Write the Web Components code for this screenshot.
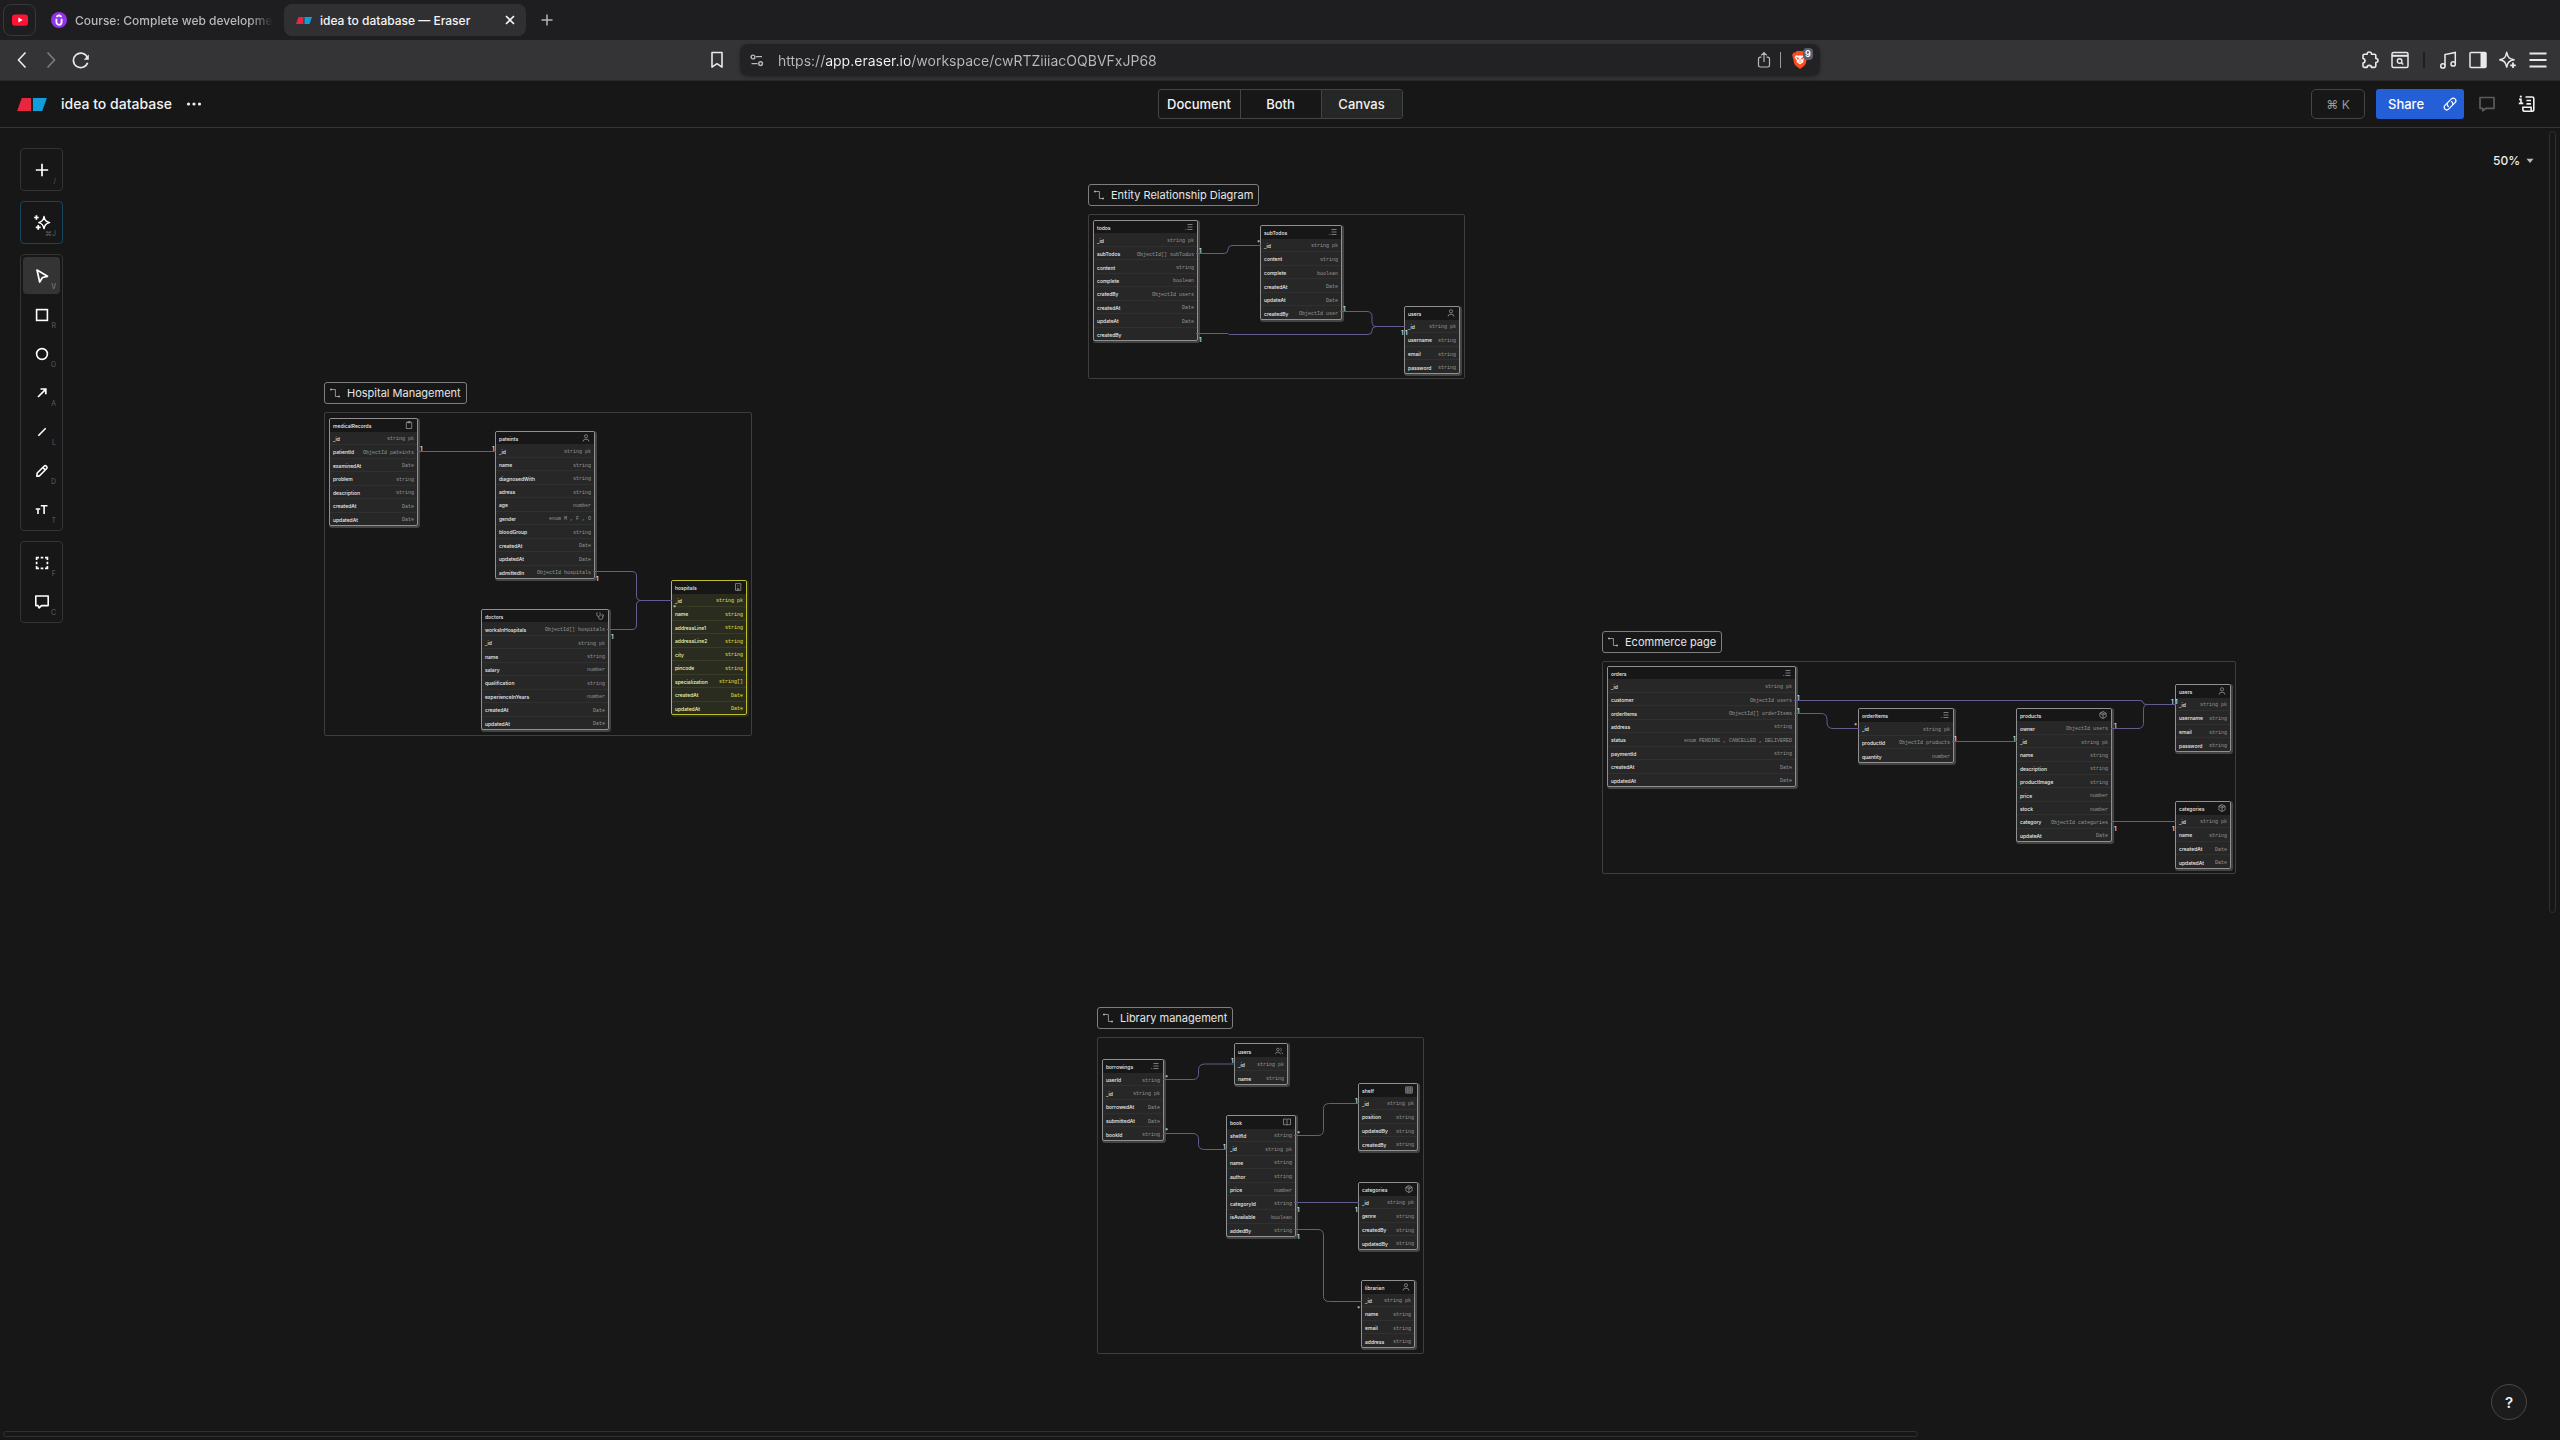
<!DOCTYPE html>
<html lang="en">
<head>
<meta charset="utf-8">
<title>idea to database — Eraser</title>
<style>
  html, body { margin: 0; height: 100%; background: #171717; }
  body { font-family: Inter, "Noto Sans", sans-serif; color: #f2f2f2; overflow: hidden; }
</style>
</head>
<body>
<eraser-window></eraser-window>
<script>
const ICONS = {
  youtube: ['0 0 16 16', '<rect x="0" y="2.4" width="16" height="11.4" rx="3" fill="#ff1233"/><path d="M6.4 5.6v5l4.2-2.5z" fill="#fff"/>'],
  udemy: ['0 0 16 16', '<circle cx="8" cy="8" r="8" fill="#9333ea"/><path d="M5.4 6.8v3.2a2.6 2.8 0 0 0 5.2 0V6.8M5.4 4.8L8 3.2l2.6 1.6" fill="none" stroke="#fff" stroke-width="1.8"/>'],
  eraser: ['0 0 32 14', '<path d="M5 0h10v14H0z" fill="#e8273f"/><path d="M17 0h15l-5 14H17z" fill="#109ddc"/>'],
  close: ['0 0 16 16', '<path d="M4 4l8 8M12 4l-8 8" fill="none" stroke="currentColor" stroke-width="1.7"/>'],
  plus: ['0 0 16 16', '<path d="M8 2.5v11M2.5 8h11" fill="none" stroke="currentColor" stroke-width="1.5"/>'],
  back: ['0 0 16 16', '<path d="M11.5 0.5L4.5 8l7 7.5" fill="none" stroke="currentColor" stroke-width="1.6"/>'],
  forward: ['0 0 16 16', '<path d="M4.5 0.5L11.5 8l-7 7.5" fill="none" stroke="currentColor" stroke-width="1.6"/>'],
  reload: ['0 0 18 18', '<path d="M15.3 6.2A7.3 7.3 0 1 0 15.6 11.8" fill="none" stroke="currentColor" stroke-width="1.7"/><path d="M16.8 3.6v5.2h-5z" fill="currentColor"/>'],
  bookmark: ['0 0 16 18', '<path d="M3 1.5h10v14.6l-5-3.4-5 3.4z" fill="none" stroke="currentColor" stroke-width="1.6" stroke-linejoin="round"/>'],
  tune: ['0 0 14 14', '<g fill="none" stroke="currentColor" stroke-width="1.4"><circle cx="3" cy="4" r="1.9"/><path d="M6 3.6h6M1.5 10.6h6"/><circle cx="10.6" cy="10.6" r="1.9"/></g>'],
  upload: ['0 0 14 18', '<path d="M4.5 6.2H3.2A1.7 1.7 0 0 0 1.5 8v6.3A1.7 1.7 0 0 0 3.2 16h7.6a1.7 1.7 0 0 0 1.7-1.7V8a1.7 1.7 0 0 0-1.7-1.8H9.500M7 11V1.700M4.200 4.400L7 1.600l2.800 2.800" fill="none" stroke="currentColor" stroke-width="1.2"/>'],
  brave: ['0 0 16 18', '<path d="M4.600 0h6.800l1.500 1.600 1.900.2 1 2.400-.5 1.700-1.500 6.700c-.3 1-1 1.700-1.800 2.300L8 18l-4-3.100c-.8-.6-1.500-1.300-1.800-2.300L.7 5.900.2 4.200l1-2.400 1.900-.2z" fill="#fb4a20"/><path d="M4 4.200l2.500.5L8 4.200l1.500.5 2.500-.5 1.400 2.300-2.300 3 .4 1.500L8 13.500 4.500 11l.4-1.500-2.300-3z" fill="#fff"/><path d="M4.600 6.500l2.200.7L6 8.500zM11.400 6.500l-2.200.7.8 1.300zM8 8v2.400M6.500 11h3" fill="#fb4a20" stroke="#fb4a20" stroke-width=".6"/>'],
  puzzle: ['0 0 18 18', '<path d="M2 4.500Q2 3.200 3.300 3.200H6.200Q6 1 8.300 1t2.200 2.200h3q1.300 0 1.300 1.300v3q2.300.1 2.200 2t-2.200 2v3.600q0 1.300-1.300 1.300H10.500q0-2-2.200-2t-2.200 2H3.300Q2 16.400 2 15.100v-3q2-.3 2-2.300T2 7.500z" fill="none" stroke="currentColor" stroke-width="1.6" stroke-linejoin="round"/>'],
  findbox: ['0 0 18 18', '<rect x="1" y="1.500" width="16" height="15" rx="1.500" fill="none" stroke="currentColor" stroke-width="1.500"/><path d="M1 4.800h16" stroke="currentColor" stroke-width="2"/><circle cx="8.600" cy="10" r="2.300" fill="none" stroke="currentColor" stroke-width="1.400"/><path d="M10.300 11.600l1.900 1.900" stroke="currentColor" stroke-width="1.400"/>'],
  music: ['0 0 18 18', '<g fill="none" stroke="currentColor" stroke-width="1.500"><path d="M6 14.600V3.600L16.300 1.500v11"/><circle cx="3.900" cy="14.900" r="2.200"/><circle cx="14.200" cy="12.900" r="2.200"/></g>'],
  sidebar: ['0 0 18 18', '<rect x="1" y="1.500" width="16" height="15" rx="1" fill="none" stroke="currentColor" stroke-width="1.500"/><path d="M11.500 1.500H17v15h-5.500z" fill="currentColor"/>'],
  leo: ['0 0 18 18', '<path d="M7.700 1.300C8.300 4 9 5.800 10 6.700s2.300 1.500 5 2.100c-2.700.6-4 1.200-5 2.100s-1.700 2.500-2.300 5.200c-.6-2.700-1.200-4.300-2.200-5.200S3 9.400.800 8.800c2.200-.6 3.700-1.200 4.700-2.100s1.600-2.700 2.200-5.400z" fill="none" stroke="currentColor" stroke-width="1.500" stroke-linejoin="round"/><path d="M14 11.500v5.600M11.200 14.300h5.600" stroke="currentColor" stroke-width="1.800"/>'],
  menu: ['0 0 18 18', '<path d="M.5 2.500h17M.5 9h17M.5 15.500h17" stroke="currentColor" stroke-width="1.800"/>'],
  dots: ['0 0 16 16', '<g fill="currentColor"><circle cx="2.500" cy="8" r="1.600"/><circle cx="8" cy="8" r="1.600"/><circle cx="13.500" cy="8" r="1.600"/></g>'],
  link: ['0 0 16 16', '<g transform="rotate(-45 8 8)" fill="none" stroke="currentColor" stroke-width="1.200"><path d="M7 5.400H3.400a2.600 2.600 0 0 0 0 5.200H8.400a2.600 2.600 0 0 0 2.300-3.600"/><path d="M9 10.600h3.600a2.600 2.600 0 0 0 0-5.200H7.600A2.600 2.600 0 0 0 5.300 9"/></g>'],
  comment: ['0 0 18 18', '<path d="M2 2.500h14v10.800H8l-3.300 2.500V13.300H2z" fill="none" stroke="currentColor" stroke-width="1.700" stroke-linejoin="round"/>'],
  notes: ['0 0 18 18', '<g fill="none" stroke="currentColor" stroke-width="1.600"><path d="M7.500 2h6.800q1.500 0 1.500 1.500v11q0 1.700-1.700 1.700H6.800q-1.900 0-1.900-1.800v-2.100h8.200v2.100q0 1.500 1.200 1.800"/><path d="M8.500 5.500h4.500M8.500 8.900h4.500"/><path d="M1 4.400h2v4M.8 8.400h4.400"/></g><circle cx="2.800" cy="1.600" r="1.100" fill="currentColor"/>'],
  caret: ['0 0 8 6', '<path d="M.5.800h7L4 5z" fill="currentColor"/>'],
  sparkles: ['0 0 18 18', '<g fill="none" stroke="currentColor" stroke-linejoin="round"><path d="M11 2.600c.7 3.600 1.600 4.900 5.600 6-4 1.100-4.900 2.400-5.600 6-.7-3.600-1.600-4.900-5.200-6 3.600-1.100 4.500-2.400 5.200-6z" stroke-width="1.500"/><path d="M3.400 1.200v4.600M1.100 3.500h4.600M5.200 11v4.800M2.800 13.400h4.800" stroke-width="1.700"/></g>'],
  pointer: ['0 0 18 18', '<path d="M4 3l10.500 6.300-5 1.200-2.800 4.500z" fill="none" stroke="currentColor" stroke-width="1.700" stroke-linejoin="round"/>'],
  square: ['0 0 18 18', '<rect x="3.600" y="3.600" width="10.800" height="10.800" fill="none" stroke="currentColor" stroke-width="1.600"/>'],
  circle: ['0 0 18 18', '<circle cx="9" cy="9" r="5.400" fill="none" stroke="currentColor" stroke-width="1.600"/>'],
  arrow: ['0 0 18 18', '<path d="M5 13l7.600-7.600M7.500 5h5.300v5.300" fill="none" stroke="currentColor" stroke-width="1.700"/>'],
  line: ['0 0 18 18', '<path d="M5.300 12.700l7.400-7.400" fill="none" stroke="currentColor" stroke-width="1.600"/>'],
  pencil: ['0 0 18 18', '<path d="M3.800 14.200l.4-3.200 7.100-7q1.100-.9 2.200.2t.2 2.300l-7.100 7.200q-1.400.8-2.800.5zM10.300 6l1.600 1.600" fill="none" stroke="currentColor" stroke-width="1.600" stroke-linejoin="round"/>'],
  textsize: ['0 0 18 18', '<path d="M7.800 4.800h6.700M11.100 4.800v8.200M2.700 8h4.500M5 8v5" fill="none" stroke="currentColor" stroke-width="1.600"/>'],
  frame: ['0 0 18 18', '<path d="M3.600 6V3.600H6M12 3.600h2.400V6M14.400 12v2.400H12M6 14.400H3.600V12M7.700 3.600h2.600M7.700 14.400h2.600M3.600 7.700v2.600M14.400 7.700v2.600" fill="none" stroke="currentColor" stroke-width="1.700"/>'],
  bubble: ['0 0 18 18', '<path d="M2.800 3h12.400v9.600H8.500l-2.400 2.300-1-2.300H2.800z" fill="none" stroke="currentColor" stroke-width="1.600" stroke-linejoin="round"/>'],
  flow: ['0 0 10 10', '<path d="M1.800 1.500H5.400V8.500H8.500" fill="none" stroke="currentColor" stroke-width=".8"/><path d="M0 .8h2v1.500H0zM8 7.800h2v1.500H8z" fill="currentColor"/>'],
  list: ['0 0 8 8', '<path d="M2.500 1.500h5M2.500 4h5M2.500 6.500h5M.3 6.500h1" stroke="currentColor" stroke-width=".7"/>'],
  user: ['0 0 8 8', '<g fill="none" stroke="currentColor" stroke-width=".7"><circle cx="4" cy="2.300" r="1.600"/><path d="M1 7.600Q1 5.200 4 5.200t3 2.400"/></g>'],
  users: ['0 0 9 8', '<g fill="none" stroke="currentColor" stroke-width=".7"><circle cx="3.300" cy="2.300" r="1.500"/><path d="M.5 7.600q0-2.400 2.800-2.400t2.800 2.400M6 .9q1.300.4 1.300 1.500T6 4M7.300 5.300q1.200.6 1.200 2.300"/></g>'],
  clipboard: ['0 0 8 8', '<path d="M1.300 1.300h5.400v6.200H1.300zM2.800.5h2.400v1.300H2.800z" fill="none" stroke="currentColor" stroke-width=".7"/>'],
  steth: ['0 0 8 8', '<g fill="none" stroke="currentColor" stroke-width=".7"><path d="M1.500.8H.8v2q0 1.600 1.700 1.600T4.200 2.800v-2h-.700M2.500 4.500q0 3 2.300 3T7 4.500"/><circle cx="6.700" cy="3.500" r=".9"/></g>'],
  building: ['0 0 8 8', '<path d="M1.500.6h5.300v6.800H1.500zM3 3h.8M4.600 3h.8M3.400 7.400V5.500h1.400v1.900" fill="none" stroke="currentColor" stroke-width=".7"/>'],
  box: ['0 0 8 8', '<path d="M4 .5l3.100 1.700v3.600L4 7.500.9 5.800V2.200zM.9 2.200L4 4l3.100-1.800M4 4v3.500M2.400 1.400l3.100 1.700" fill="none" stroke="currentColor" stroke-width=".7"/>'],
  book: ['0 0 8 8', '<path d="M4 1.600Q3.400 1 2.400 1H.5v5.700h2.200Q3.700 6.700 4 7.300 4.300 6.700 5.300 6.700H7.500V1H5.600Q4.600 1 4 1.600v5.500" fill="none" stroke="currentColor" stroke-width=".7"/>'],
  grid: ['0 0 8 8', '<path d="M.7.900h6.600v6.200H.7zM.7 3h6.600M.7 5h6.600M2.900.9v6.200M5.100.9v6.200" fill="none" stroke="currentColor" stroke-width=".7"/>']
};

/* Base class: clones a template string into an open shadow root. */
class ShadowElement extends HTMLElement {
  connectedCallback() {
    if (this.shadowRoot) return;
    const t = document.createElement('template');
    t.innerHTML = `<style>*{box-sizing:border-box}button{font:inherit;color:inherit;background:none;border:0;padding:0;margin:0;cursor:pointer;display:flex;align-items:center;justify-content:center}${this.css()}</style>${this.html()}`;
    this.attachShadow({ mode: 'open' }).append(t.content.cloneNode(true));
  }
  css() { return ':host{display:block}'; }
  html() { return '<slot></slot>'; }
}

/* <ui-icon name w h>: one glyph of the icon set. */
customElements.define('ui-icon', class extends ShadowElement {
  css() { return ':host{display:inline-flex;flex:none}svg{display:block}'; }
  html() {
    const [box, body] = ICONS[this.getAttribute('name')];
    const w = this.getAttribute('w') || 18, h = this.getAttribute('h') || w;
    return `<svg width="${w}" height="${h}" viewBox="${box}" aria-hidden="true">${body}</svg>`;
  }
});

customElements.define('browser-tab', class extends ShadowElement {
  css() { return `
    :host{display:flex;align-items:center;height:32px;width:242px;border-radius:8px;padding:0 8px 0 12px;gap:8px;color:#b9b9bb;font-size:12px;font-weight:500;white-space:nowrap}
    :host([active]){background:#303032;color:#f4f4f4}
    :host([pinned]){width:33px;padding:0;justify-content:center;border:1px solid #38383a}
    .t{flex:1;overflow:hidden}
    :host([pinned]) .t{display:none}
    :host([fade]) .t{mask-image:linear-gradient(90deg,#000 calc(100% - 24px),transparent)}
    button{width:16px;height:16px}`; }
  html() { return `<slot name="icon"></slot><span class="t"><slot></slot></span>${this.hasAttribute('active') ? '<button aria-label="Close tab"><ui-icon name="close" w="16"></ui-icon></button>' : ''}`; }
});

customElements.define('tab-strip', class extends ShadowElement {
  css() { return `
    :host{display:flex;align-items:center;height:40px;background:#1e1e20;padding-left:3px;gap:3px}
    .new{width:36px;height:32px;color:#b5b5b7}`; }
  html() { return `
    <browser-tab pinned><ui-icon slot="icon" name="youtube" w="16"></ui-icon></browser-tab>
    <browser-tab fade><ui-icon slot="icon" name="udemy" w="16"></ui-icon>Course: Complete web developmen</browser-tab>
    <browser-tab active><ui-icon slot="icon" name="eraser" w="16" h="7"></ui-icon>idea to database — Eraser</browser-tab>
    <button class="new" aria-label="New tab"><ui-icon name="plus" w="16"></ui-icon></button>`; }
});

customElements.define('browser-toolbar', class extends ShadowElement {
  css() { return `
    :host{display:grid;grid-template-columns:1fr minmax(400px,1080px) 1fr;align-items:center;height:41px;background:#343436;border-bottom:1px solid #2a2a2c;color:#e9e9ea}
    .nav{display:flex;align-items:center;gap:12px;padding:0 15px 0 14px}
    .nav .off{color:#7b7b7d}.nav .mark{margin-left:auto}
    .url{display:flex;align-items:center;height:32px;border-radius:8px;background:#222224;padding:0 12px 0 10px;box-shadow:0 1px 4px rgba(0,0,0,.3);color:#b9b9bb}
    input{flex:1;min-width:0;height:24px;border:0;outline:0;padding:0;margin:0 12px 0 14px;font:14px Inter,sans-serif;color:transparent;background:linear-gradient(90deg,#b9b9bb 47px,#f4f4f4 47px,#f4f4f4 132px,#b9b9bb 132px);-webkit-background-clip:text;background-clip:text}
    .sep{width:1px;height:16px;background:#99999b;margin:0 11px 0 9px}
    .shield{position:relative}
    .badge{position:absolute;left:11px;top:-3px;height:12px;padding:0 2px;min-width:10px;border-radius:4px;background:#5c5f70;color:#fff;font:600 9px/12px Inter,sans-serif;text-align:center}
    .tools{display:flex;align-items:center;justify-content:flex-end;gap:12px;padding-right:13px}
    .rule{width:2px;height:16px;background:#1f1f21;margin:0 2px}`; }
  html() { return `
    <nav class="nav"><button aria-label="Back"><ui-icon name="back" w="16"></ui-icon></button>
      <button class="off" aria-label="Forward"><ui-icon name="forward" w="18" h="16"></ui-icon></button>
      <button aria-label="Reload"><ui-icon name="reload" w="18"></ui-icon></button>
      <button class="mark" aria-label="Bookmark"><ui-icon name="bookmark" w="16" h="18"></ui-icon></button></nav>
    <div class="url"><ui-icon name="tune" w="14"></ui-icon>
      <input type="text" aria-label="Address" value="https://app.eraser.io/workspace/cwRTZiiiacOQBVFxJP68">
      <button aria-label="Share page"><ui-icon name="upload" w="14" h="18"></ui-icon></button><span class="sep"></span>
      <button class="shield" aria-label="Shields"><ui-icon name="brave" w="16" h="18"></ui-icon><span class="badge">9</span></button></div>
    <div class="tools"><button aria-label="Extensions"><ui-icon name="puzzle"></ui-icon></button>
      <button aria-label="Search tabs"><ui-icon name="findbox"></ui-icon></button><span class="rule"></span>
      <button aria-label="Media"><ui-icon name="music"></ui-icon></button>
      <button aria-label="Sidebar"><ui-icon name="sidebar"></ui-icon></button>
      <button aria-label="Assistant"><ui-icon name="leo"></ui-icon></button>
      <button aria-label="Menu"><ui-icon name="menu"></ui-icon></button></div>`; }
});

customElements.define('view-switch', class extends ShadowElement {
  css() { return `
    :host{display:flex;height:30px;border:1px solid #444;border-radius:3px;overflow:hidden;font-size:13px;font-weight:500}
    button{width:81px}
    button+button{border-left:1px solid #444}
    [aria-pressed=true]{background:#252626}`; }
  html() { return ['Document', 'Both', 'Canvas'].map(v => `<button aria-pressed="${v === 'Canvas'}">${v}</button>`).join(''); }
});

customElements.define('app-header', class extends ShadowElement {
  css() { return `
    :host{display:grid;grid-template-columns:1fr auto 1fr;align-items:center;height:47px;border-bottom:1px solid #363636;background:#171717}
    .left{display:flex;align-items:center;padding-left:16px}
    h1{margin:0 14px 0 13px;font-size:14px;font-weight:500;line-height:20px}
    .right{display:flex;align-items:center;justify-content:flex-end;padding-right:24px}
    .cmd{width:54px;height:30px;border:1px solid #444;border-radius:5px;color:#9a9a9a;font-size:12px;margin-right:11px}
    .share{width:88px;height:30px;border-radius:3px;background:#255fd8;color:#fff;font-size:13px;font-weight:500;justify-content:space-between;padding:0 6px 0 12px;margin-right:14px}
    .dim{color:#5c5c5c;margin-right:22px}`; }
  html() { return `
    <div class="left"><ui-icon name="eraser" w="32" h="13"></ui-icon><h1>idea to database</h1><button aria-label="More"><ui-icon name="dots" w="16"></ui-icon></button></div>
    <view-switch></view-switch>
    <div class="right"><button class="cmd">⌘ K</button><button class="share">Share<ui-icon name="link" w="16"></ui-icon></button>
      <button class="dim" aria-label="Comments"><ui-icon name="comment"></ui-icon></button><button aria-label="Notes"><ui-icon name="notes"></ui-icon></button></div>`; }
});

customElements.define('tool-group', class extends ShadowElement {
  css() { return `
    :host{display:flex;flex-direction:column;gap:2px;padding:2px;border:1px solid #343434;border-radius:4px;background:#171717}
    :host([accent]){border-color:#16465f}`; }
});
customElements.define('tool-button', class extends ShadowElement {
  css() { return `
    :host{display:block}
    button{width:37px;height:37px;border-radius:4px;position:relative;color:#fff}
    :host([active]) button{background:#343434}
    kbd{position:absolute;right:4px;bottom:3px;font:7px/8px Inter,sans-serif;color:#5e5e5e}
    :host([active]) kbd{color:#8a8a8a}`; }
  html() { return `<button aria-label="${this.getAttribute('label')}"><ui-icon name="${this.getAttribute('icon')}"></ui-icon><kbd><slot></slot></kbd></button>`; }
});
customElements.define('tool-rail', class extends ShadowElement {
  css() { return ':host{display:flex;flex-direction:column;gap:10px}'; }
  html() {
    const b = (icon, key, label, a = '') => `<tool-button icon="${icon}" label="${label}" ${a}>${key}</tool-button>`;
    return `<tool-group>${b('plus', '/', 'Insert')}</tool-group>
      <tool-group accent>${b('sparkles', '⌘J', 'AI')}</tool-group>
      <tool-group>${b('pointer', 'V', 'Select', 'active')}${b('square', 'R', 'Rectangle')}${b('circle', 'O', 'Ellipse')}${b('arrow', 'A', 'Arrow')}${b('line', 'L', 'Line')}${b('pencil', 'D', 'Draw')}${b('textsize', 'T', 'Text')}</tool-group>
      <tool-group>${b('frame', 'F', 'Figure')}${b('bubble', 'C', 'Comment')}</tool-group>`;
  }
});

/* <entity-table name icon rows="field:type|…">: one entity of a diagram; its rows share the height evenly. */
customElements.define('entity-table', class extends ShadowElement {
  css() { return `
    :host{display:block;border:1px solid #909090;border-radius:2px;background:#272727;box-shadow:1px 1px 0 1px #434343;overflow:hidden;--line:#303030;--name:#ececec;--type:#979797}
    :host([tone=yellow]){border-color:#bdbf2c;background:#2b2c20;box-shadow:1px 1px 0 1px #2b2c20;--line:#3a3b26;--name:#f5f5b4;--type:#e2e437}
    table{display:flex;flex-direction:column;height:100%;font-size:5px;line-height:8px;white-space:nowrap}
    thead,tbody{display:contents}
    tr{display:flex;flex:1;min-height:0;align-items:center;justify-content:space-between;padding:2px 3px 0}
    th,td{padding:0;font-weight:500;color:var(--name)}
    thead tr{background:#171717;padding-right:4px}
    thead th{color:#ececec}
    ui-icon{color:#a5a5a5}
    tbody tr+tr{border-top:1px solid var(--line)}
    td{font-family:"Liberation Mono",monospace;font-weight:400;color:var(--type);padding-top:1px}`; }
  html() {
    const rows = this.getAttribute('rows').split('|').map(r => { const [n, t = ''] = r.split(':'); return `<tr><th scope="row">${n}</th><td>${t}</td></tr>`; }).join('');
    return `<table><thead><tr><th>${this.getAttribute('name')}</th><th><ui-icon name="${this.getAttribute('icon')}" w="8"></ui-icon></th></tr></thead><tbody>${rows}</tbody></table>`;
  }
});

customElements.define('diagram-label', class extends ShadowElement {
  css() { return ':host{display:flex;align-items:center;height:22px;padding:0 5px;gap:7px;border:1px solid #7e7e7e;border-radius:3px;background:#171717;font-size:11px;white-space:nowrap;color:#e6e6e6}ui-icon{color:#b0b0b0}'; }
  html() { return '<ui-icon name="flow" w="10"></ui-icon><slot></slot>'; }
});

/* Board coordinates are window coordinates; BOARD_TOP is where the board starts. */
const BOARD_TOP = 128;
const FRAMES = [
  ['Entity Relationship Diagram', 1088, 214, 377, 165],
  ['Hospital Management', 324, 412, 428, 324],
  ['Ecommerce page', 1602, 661, 634, 213],
  ['Library management', 1097, 1037, 327, 317]
];
const ENTITIES = [
  ['todos', 'list', 1093, 220, 105, 121, '_id:string pk|subTodos:ObjectId[] subTodos|content:string|complete:boolean|cratedBy:ObjectId users|createdAt:Date|updateAt:Date|createdBy'],
  ['subTodos', 'list', 1260, 225, 82, 95, '_id:string pk|content:string|complete:boolean|createdAt:Date|updateAt:Date|createdBy:ObjectId user'],
  ['users', 'user', 1404, 306, 56, 68, '_id:string pk|username:string|email:string|password:string'],
  ['medicalRecords', 'clipboard', 329, 418, 89, 108, '_id:string pk|patientId:ObjectId pateints|examinedAt:Date|problem:string|description:string|createdAt:Date|updatedAt:Date'],
  ['pateints', 'user', 495, 431, 100, 148, '_id:string pk|name:string|diagnosedWith:string|adress:string|age:number|gender:enum M , F , O|bloodGroup:string|createdAt:Date|updatedAt:Date|admittedIn:ObjectId hospitals'],
  ['doctors', 'steth', 481, 609, 128, 121, 'worksInHospitals:ObjectId[] hospitals|_id:string pk|name:string|salary:number|qualification:string|experienceInYears:number|createdAt:Date|updatedAt:Date'],
  ['hospitals', 'building', 671, 580, 76, 135, '_id:string pk|name:string|addressLine1:string|addressLine2:string|city:string|pincode:string|specialization:string[]|createdAt:Date|updatedAt:Date', 'yellow'],
  ['orders', 'list', 1607, 666, 189, 121, '_id:string pk|customer:ObjectId users|orderItems:ObjectId[] orderItems|address:string|status:enum PENDING , CANCELLED , DELIVERED|paymentId:string|createdAt:Date|updatedAt:Date'],
  ['orderItems', 'list', 1858, 708, 96, 55, '_id:string pk|productId:ObjectId products|quantity:number'],
  ['products', 'box', 2016, 708, 96, 134, 'owner:ObjectId users|_id:string pk|name:string|description:string|productImage:string|price:number|stock:number|category:ObjectId categories|updateAt:Date'],
  ['users', 'user', 2175, 684, 56, 68, '_id:string pk|username:string|email:string|password:string'],
  ['categories', 'box', 2175, 801, 56, 68, '_id:string pk|name:string|createdAt:Date|updatedAt:Date'],
  ['borrowings', 'list', 1102, 1059, 62, 82, 'userId:string|_id:string pk|borrowedAt:Date|submittedAt:Date|bookId:string'],
  ['users', 'users', 1234, 1043, 54, 42, '_id:string pk|name:string'],
  ['book', 'book', 1226, 1115, 70, 122, 'shelfId:string|_id:string pk|name:string|author:string|price:number|categoryId:string|isAvailable:boolean|addedBy:string'],
  ['shelf', 'grid', 1358, 1083, 60, 68, '_id:string pk|position:string|updatedBy:string|createdBy:string'],
  ['categories', 'box', 1358, 1182, 60, 68, '_id:string pk|genre:string|createdBy:string|updatedBy:string'],
  ['librarian', 'user', 1361, 1280, 54, 68, '_id:string pk|name:string|email:string|address:string']
];
const WIRES = [
  'M1196 253.5H1224q4 0 4-4t4-4H1261', 'M1196 333.5H1228l1 1H1368q4 0 4-4t4-4H1405', 'M1340 311.500H1367q5 0 5 5v5q0 5 4 5',
  'M417 451.500H496', 'M593 571.500H632q4.500 0 4.500 4.500v20q0 4.500 5 4.500H672', 'M607 629.500H632q4.500 0 4.500-4.500v-20q0-4.500 5-4.500',
  'M1794 700.500H2140q3 0 3 2t4 2H2176', 'M1794 713.500H1821q6 0 6 6v3q0 6 6 6H1859', 'M1952 741.500H2017', 'M2111 728.500H2138q5 0 5.500-5v-14q0-5 4-5', 'M2111 821.500H2176',
  'M1163 1079.500H1193q5 0 5.500-5v-5q0-5 6-5.500H1235', 'M1163 1133.500H1193q5 0 5.500 5v6q0 5 6 5H1227',
  'M1294 1135.500H1318q5 0 5.500-5v-22q0-5 6-5H1359', 'M1294 1202.500H1359', 'M1294 1229.500H1318q5 0 5.500 5v62q0 5 6 5H1362'
];
const MARKS = [
  ['1', 1199, 253], ['*', 1257, 245], ['1', 1343, 311], ['1', 1199, 342], ['1', 1401, 335], ['1', 1405, 335],
  ['1', 420, 451], ['1', 492, 451], ['1', 596, 581], ['1', 611, 639], ['*', 673, 610],
  ['1', 1797, 700], ['1', 1797, 713], ['*', 1854, 728], ['1', 1954, 741], ['1', 2013, 741], ['1', 2114, 728], ['1', 2171, 704], ['1', 2175, 704], ['1', 2114, 831], ['1', 2172, 831],
  ['*', 1165, 1080], ['1', 1231, 1063], ['*', 1165, 1133], ['1', 1223, 1149], ['*', 1297, 1136], ['1', 1355, 1103],
  ['1', 1297, 1212], ['1', 1355, 1212], ['1', 1297, 1239], ['*', 1357, 1311]
];

customElements.define('diagram-board', class extends ShadowElement {
  css() { return `
    :host{display:block;position:relative;overflow:hidden;background:#171717}
    .frame,entity-table,diagram-label,svg.wires,tool-rail,.zoom,.help,.bar{position:absolute}
    .frame{border:1px solid #3e3e3e;border-radius:2px}
    svg.wires{left:0;top:0;width:100%;height:100%;overflow:visible;pointer-events:none}
    .wires path{fill:none;stroke:#625d8c;stroke-width:1}
    .wires text{font:600 6px Inter,sans-serif;fill:#e0e0e0}
    tool-rail{left:20px;top:20px}
    .zoom{right:26px;top:24px;display:flex;align-items:center;gap:5px}
    select{appearance:none;border:0;background:none;color:#eee;font:500 12px/18px Inter,sans-serif;padding:0;outline:0}
    .zoom ui-icon{color:#bbb}
    .help{right:33px;bottom:20px;width:36px;height:36px;border-radius:18px;border:1px solid #484848;background:#1c1c1c;font-size:15px;font-weight:600}
    .bar{border:1px solid #303030;border-radius:4px}
    .v{right:4px;top:3px;width:7px;height:calc(60% - 5px)}.h{left:3px;bottom:3px;height:6px;width:calc(75% - 5px)}`; }
  html() {
    const at = (x, y) => `left:${x}px;top:${y - BOARD_TOP}px`;
    return FRAMES.map(([n, x, y, w, h]) => `<div class="frame" style="${at(x, y)};width:${w}px;height:${h}px"></div><diagram-label style="${at(x, y - 30)}">${n}</diagram-label>`).join('')
      + ENTITIES.map(([n, i, x, y, w, h, r, tone]) => `<entity-table name="${n}" icon="${i}" rows="${r}" ${tone ? `tone="${tone}"` : ''} style="${at(x, y)};width:${w}px;height:${h}px"></entity-table>`).join('')
      + `<svg class="wires"><g transform="translate(0 ${-BOARD_TOP})">${WIRES.map(d => `<path d="${d}"/>`).join('')}${MARKS.map(([t, x, y]) => `<text x="${x}" y="${y}">${t}</text>`).join('')}</g></svg>
      <tool-rail></tool-rail>
      <label class="zoom"><select aria-label="Zoom"><option>50%</option></select><ui-icon name="caret" w="8" h="6"></ui-icon></label>
      <div class="bar v"></div><div class="bar h"></div>
      <button class="help" aria-label="Help">?</button>`;
  }
});

customElements.define('eraser-window', class extends ShadowElement {
  css() { return ':host{display:flex;flex-direction:column;height:100vh}diagram-board{flex:1;min-height:0}'; }
  html() { return '<tab-strip></tab-strip><browser-toolbar></browser-toolbar><app-header></app-header><diagram-board></diagram-board>'; }
});
</script>
</body>
</html>
